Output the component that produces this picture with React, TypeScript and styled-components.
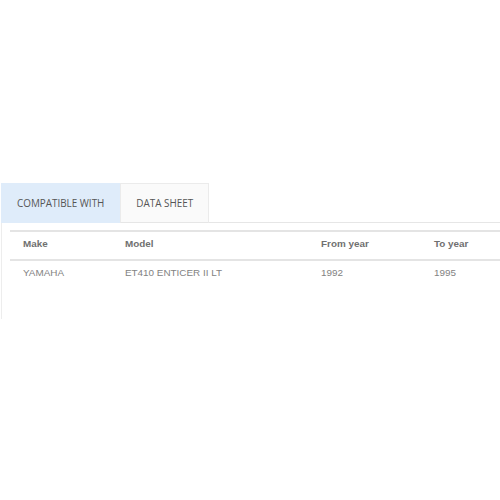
import React from "react";
import styled, { createGlobalStyle } from "styled-components";

const Global = createGlobalStyle`
  html, body { margin: 0; padding: 0; background: #fff; }
  body { width: 500px; height: 500px; overflow: hidden; }
`;

const Page = styled.div`
  padding-top: 183px;
  padding-left: 1px;
  width: 620px;
`;

const TabBar = styled.div`
  display: flex;
  border-bottom: 1px solid #e6e6e6;
  height: 39px;
`;

const Tab = styled.div<{ $active?: boolean }>`
  box-sizing: border-box;
  height: 40px;
  margin-bottom: -1px;
  padding: 0 15px;
  display: flex;
  align-items: center;
  font-family: "Open Sans", sans-serif;
  font-size: 9.9px;
  color: #555;
  text-transform: uppercase;
  background: ${(p) => (p.$active ? "#dfecfa" : "#fafafa")};
  border: 1px solid ${(p) => (p.$active ? "#dfecfa" : "#ebebeb")};
  border-bottom: 1px solid ${(p) => (p.$active ? "#dfecfa" : "#e6e6e6")};
`;

const Panel = styled.div`
  border-left: 1px solid #ededed;
  padding: 7px 8px 31px 8px;
`;

const Table = styled.table`
  border-collapse: collapse;
  width: 575px;
  font-family: "Liberation Sans", Arial, sans-serif;
  font-size: 9.9px;
  line-height: 12px;
  table-layout: fixed;
`;

const Th = styled.th`
  text-align: left;
  font-weight: bold;
  color: #707070;
  padding: 6px 13px 9px;
  vertical-align: top;
  border-top: 2px solid #e4e4e4;
  border-bottom: 2px solid #e4e4e4;
`;

const Td = styled.td`
  color: #828282;
  padding: 6px 13px 9px;
  vertical-align: top;
`;

const cols = [
  { label: "Make", w: 102 },
  { label: "Model", w: 196 },
  { label: "From year", w: 113 },
  { label: "To year", w: 164 },
];

const rows = [["YAMAHA", "ET410 ENTICER II LT", "1992", "1995"]];

export default function App() {
  return (
    <>
      <Global />
      <Page>
        <TabBar>
          <Tab $active>Compatible with</Tab>
          <Tab>Data sheet</Tab>
        </TabBar>
        <Panel>
          <Table>
            <colgroup>
              {cols.map((c) => (
                <col key={c.label} style={{ width: c.w }} />
              ))}
            </colgroup>
            <thead>
              <tr>
                {cols.map((c) => (
                  <Th key={c.label}>{c.label}</Th>
                ))}
              </tr>
            </thead>
            <tbody>
              {rows.map((r, i) => (
                <tr key={i}>
                  {r.map((v, j) => (
                    <Td key={j}>{v}</Td>
                  ))}
                </tr>
              ))}
            </tbody>
          </Table>
        </Panel>
      </Page>
    </>
  );
}
